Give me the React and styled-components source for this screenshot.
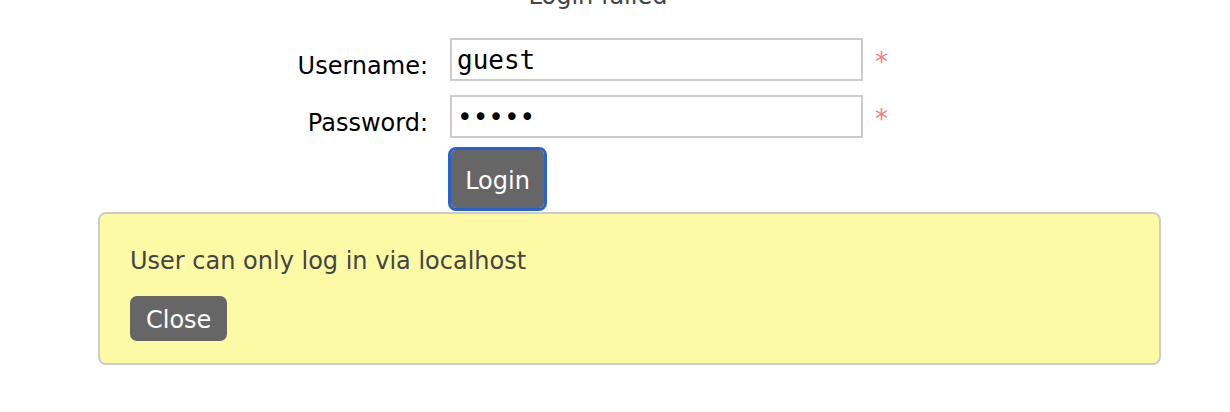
import React from 'react';
import styled, { createGlobalStyle } from 'styled-components';

const GlobalStyle = createGlobalStyle`
  html, body {
    margin: 0;
    background: #fff;
  }
  body {
    font-family: "DejaVu Sans", Verdana, sans-serif;
    overflow: hidden;
  }
`;

const Page = styled.div`
  width: 1230px;
  height: 412px;
  overflow: hidden;
`;

const Title = styled.h2`
  width: 1196px;
  margin: -18px 0 28px;
  font-size: 24px;
  font-weight: normal;
  line-height: 28px;
  color: #444;
  text-align: center;
`;

const Form = styled.form`
  display: grid;
  grid-template-columns: 450px 413px auto;
  grid-template-rows: 43px 43px auto;
  row-gap: 14px;
  align-items: end;
  margin: 0;
`;

const Label = styled.label`
  padding: 0 22px 1px 0;
  font-size: 24px;
  line-height: 28px;
  color: #000;
  text-align: right;
`;

const Field = styled.input`
  box-sizing: border-box;
  width: 100%;
  height: 43px;
  margin: 0;
  padding: 0 5px;
  border: 2px solid #ccc;
  border-radius: 0;
  font-family: "DejaVu Sans Mono", "Liberation Mono", monospace;
  font-size: 26px;
  color: #000;
  background: #fff;
  outline: none;
`;

const Required = styled.span`
  align-self: start;
  padding: 10px 0 0 12px;
  font-size: 26px;
  line-height: 28px;
  color: #f08080;
`;

const Actions = styled.div`
  grid-column: 2;
  display: flex;
  align-self: start;
  margin-top: -2px;
`;

const Button = styled.button`
  box-sizing: border-box;
  padding: ${p => (p.$big ? '17px 0 13px' : '10px 16px 6px')};
  width: ${p => (p.$big ? '93px' : 'auto')};
  height: ${p => (p.$big ? '58px' : '45px')};
  margin: ${p => (p.$big ? '0 0 0 1px' : '0')};
  border: none;
  border-radius: ${p => (p.$big ? '5px' : '7px')};
  outline: ${p => (p.$focused ? '3px solid #2a61d0' : 'none')};
  background: #666;
  color: #fff;
  font-family: "DejaVu Sans", Verdana, sans-serif;
  font-size: 24px;
  line-height: ${p => (p.$big ? '28px' : '29px')};
  cursor: pointer;
`;

const Alert = styled.div`
  box-sizing: border-box;
  width: 1063px;
  height: 153px;
  margin: 4px 0 0 98px;
  padding: 33px 30px 0;
  border: 2px solid #ccc;
  border-radius: 8px;
  background: #fdfaa6;
`;

const Message = styled.p`
  margin: 0 0 21px;
  font-size: 24px;
  line-height: 28px;
  color: #444;
`;

export default function App() {
  return (
    <Page>
      <GlobalStyle />
      <Title>Login failed</Title>
      <Form onSubmit={e => e.preventDefault()}>
        <Label htmlFor="user">Username:</Label>
        <Field id="user" type="text" defaultValue="guest" readOnly />
        <Required>*</Required>
        <Label htmlFor="pass">Password:</Label>
        <Field id="pass" type="password" defaultValue="guest" readOnly />
        <Required>*</Required>
        <Actions>
          <Button type="submit" $big $focused>Login</Button>
        </Actions>
      </Form>
      <Alert>
        <Message>User can only log in via localhost</Message>
        <Button type="button">Close</Button>
      </Alert>
    </Page>
  );
}
